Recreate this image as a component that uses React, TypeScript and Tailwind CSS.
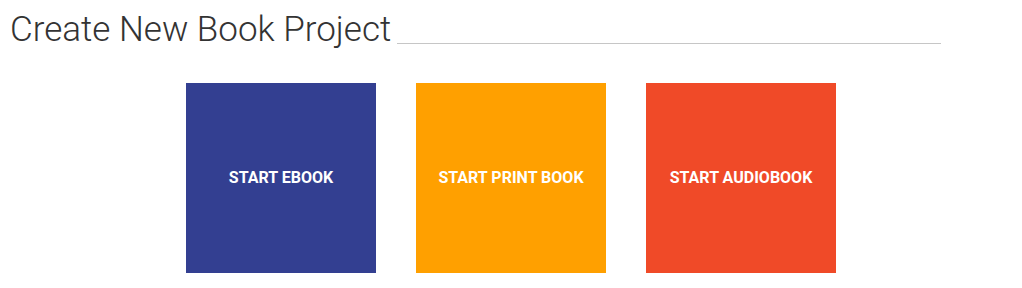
import React from "react";

export default function App() {
  const cards = [
    { label: "START EBOOK", cls: "bg-[#333f91]" },
    { label: "START PRINT BOOK", cls: "bg-[#ffa000]" },
    { label: "START AUDIOBOOK", cls: "bg-[#f04a28]" },
  ];
  return (
    <div className="w-[1022px] h-[288px] bg-white overflow-hidden" style={{ fontFamily: "Roboto, 'Liberation Sans', sans-serif" }}>
      <div className="flex items-end w-[941px] pl-[10px] pt-[8px]">
        <h1 className="text-[35px] leading-[43px] font-light text-[#333333] whitespace-nowrap">Create New Book Project</h1>
        <div className="flex-1 ml-[6px] mb-[7px] border-b border-[#c6c6c6]" />
      </div>
      <div className="flex justify-center gap-[40px] mt-[32px]">
        {cards.map((c) => (
          <div key={c.label} className={`w-[190px] h-[190px] flex items-center justify-center ${c.cls}`}>
            <span className="text-white font-bold text-[16px] leading-none">{c.label}</span>
          </div>
        ))}
      </div>
    </div>
  );
}
